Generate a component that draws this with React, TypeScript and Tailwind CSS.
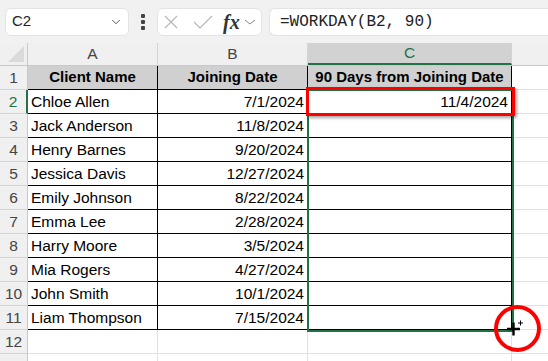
import { ChevronDown } from 'lucide-react';

const rows = [
  ['Chloe Allen', '7/1/2024'],
  ['Jack Anderson', '11/8/2024'],
  ['Henry Barnes', '9/20/2024'],
  ['Jessica Davis', '12/27/2024'],
  ['Emily Johnson', '8/22/2024'],
  ['Emma Lee', '2/28/2024'],
  ['Harry Moore', '3/5/2024'],
  ['Mia Rogers', '4/27/2024'],
  ['John Smith', '10/1/2024'],
  ['Liam Thompson', '7/15/2024'],
];

function RowHead({ n, active }: { n?: number; active?: boolean }) {
  return (
    <div
      className={`w-[28px] shrink-0 flex items-center justify-center bg-[#f0f0f0] border-b border-[#d4d4d4] ${
        active ? 'text-[#217346] border-r-2 border-r-[#217346]' : 'text-[#444] border-r border-r-[#c8c8c8]'
      }`}
    >
      {n}
    </div>
  );
}

export default function App() {
  return (
    <div className="w-[548px] h-[361px] overflow-hidden bg-white relative text-[15.5px] text-black" style={{ fontFamily: '"Liberation Sans", Arial, sans-serif' }}>
      {/* toolbar */}
      <div className="h-[43px] bg-[#f1f1f1] flex items-center pl-[5px]">
        <div className="w-[124px] h-[28px] bg-white rounded-[6px] border border-[#e3e3e3] flex items-center justify-between pl-[6px] pr-[5px]">
          <span className="text-[15px] text-[#222]">C2</span>
          <ChevronDown className="w-[14px] h-[14px] text-[#444]" strokeWidth={1.5} />
        </div>
        <div className="w-[28px] flex flex-col items-center gap-[2px]">
          <span className="w-[4px] h-[4px] bg-[#444] rounded-[1px]" />
          <span className="w-[4px] h-[4px] bg-[#444] rounded-[1px]" />
          <span className="w-[4px] h-[4px] bg-[#444] rounded-[1px]" />
        </div>
        <div className="w-[105px] h-[28px] bg-white rounded-[6px] border border-[#e3e3e3] flex items-center pl-[6px] pr-[4px]">
          <svg width="14" height="14" viewBox="0 0 14 14" className="shrink-0">
            <path d="M1 1 L13 13 M13 1 L1 13" stroke="#b5b5b5" strokeWidth="1.1" fill="none" />
          </svg>
          <svg width="20" height="14" viewBox="0 0 20 14" className="shrink-0 ml-[15px]">
            <path d="M1 7 L7 13 L19 1" stroke="#b5b5b5" strokeWidth="1.1" fill="none" />
          </svg>
          <span className="italic font-bold text-[20px] text-[#333] leading-none ml-[10px]" style={{ fontFamily: '"Liberation Serif", serif' }}>fx</span>
          <svg width="12" height="8" viewBox="0 0 12 8" className="shrink-0 ml-[4px]">
            <path d="M1 2 L6 6 L11 2" stroke="#888" strokeWidth="1" fill="none" />
          </svg>
        </div>
        <div className="ml-[7px] flex-1 h-[28px] bg-white rounded-l-[6px] border border-r-0 border-[#e3e3e3] flex items-center pl-[10px]">
          <span className="text-[16px] text-[#222]" style={{ fontFamily: '"Liberation Mono", monospace' }}>=WORKDAY(B2, 90)</span>
        </div>
      </div>

      {/* column headers */}
      <div className="flex h-[23px] bg-[#f0f0f0] text-[#444] border-b border-[#c8c8c8]">
        <div className="w-[28px] shrink-0 border-r border-[#c8c8c8] relative">
          <svg width="16" height="16" viewBox="0 0 16 16" className="absolute right-[3px] bottom-[3px]">
            <path d="M16 0 L16 16 L0 16 Z" fill="#dadada" />
          </svg>
        </div>
        <div className="w-[130px] shrink-0 border-r border-[#d4d4d4] flex items-center justify-center">A</div>
        <div className="w-[150px] shrink-0 border-r border-[#d4d4d4] flex items-center justify-center">B</div>
        <div className="w-[204px] shrink-0 bg-[#d2d2d2] text-[#217346] border-b-2 border-[#217346] border-r border-r-[#d4d4d4] flex items-center justify-center">C</div>
        <div className="flex-1" />
      </div>

      {/* row 1 */}
      <div className="flex h-[24px]">
        <RowHead n={1} />
        <div className="w-[130px] shrink-0 bg-[#d0d0d0] border-r border-b border-black flex items-center justify-center font-bold text-[15px]">Client Name</div>
        <div className="w-[150px] shrink-0 bg-[#d0d0d0] border-r border-b border-black flex items-center justify-center font-bold text-[15px]">Joining Date</div>
        <div className="w-[204px] shrink-0 bg-[#d0d0d0] border-r border-b border-black flex items-center justify-center font-bold text-[15px]">90 Days from Joining Date</div>
        <div className="flex-1 border-b border-[#e1e1e1]" />
      </div>

      {rows.map((r, i) => (
        <div key={i} className="flex h-[24px]">
          <RowHead n={i + 2} active={i === 0} />
          <div className="w-[130px] shrink-0 border-r border-b border-black flex items-center pl-[3px]">{r[0]}</div>
          <div className="w-[150px] shrink-0 border-r border-b border-black flex items-center justify-end pr-[3px]">{r[1]}</div>
          <div className="w-[204px] shrink-0 border-r border-b border-black flex items-center justify-end pr-[3px]">{i === 0 ? '11/4/2024' : ''}</div>
          <div className="flex-1 border-b border-[#e1e1e1]" />
        </div>
      ))}

      <div className="flex h-[24px]">
        <RowHead n={12} />
        <div className="w-[130px] shrink-0 border-r border-b border-[#e1e1e1]" />
        <div className="w-[150px] shrink-0 border-r border-b border-[#e1e1e1]" />
        <div className="w-[204px] shrink-0 border-r border-b border-[#e1e1e1]" />
        <div className="flex-1 border-b border-[#e1e1e1]" />
      </div>
      <div className="flex h-[24px]">
        <RowHead />
        <div className="w-[130px] shrink-0 border-r border-[#e1e1e1]" />
        <div className="w-[150px] shrink-0 border-r border-[#e1e1e1]" />
        <div className="w-[204px] shrink-0 border-r border-[#e1e1e1]" />
      </div>

      {/* selection C2:C11 */}
      <div className="absolute left-[307px] top-[89px] w-[207px] h-[243px] border-2 border-[#217346] pointer-events-none" />
      {/* red highlight around C2 */}
      <div className="absolute left-[306px] top-[87px] w-[209px] h-[29px] border-[3px] border-[#ff0000] shadow-[2px_2px_3px_rgba(0,0,0,0.35)] pointer-events-none" />
      {/* red circle around fill handle */}
      <div className="absolute left-[494px] top-[305px] w-[47px] h-[47px] rounded-full border-[4px] border-[#ff0000] pointer-events-none" />
      {/* fill cursor */}
      <svg width="20" height="20" viewBox="0 0 20 20" className="absolute left-[505px] top-[319px] pointer-events-none">
        <path d="M2 10 H15 M8.5 3.5 V16.5" stroke="#000" strokeWidth="2.4" />
        <path d="M13 4 H18 M15.5 1.5 V6.5" stroke="#000" strokeWidth="1" />
      </svg>
    </div>
  );
}
